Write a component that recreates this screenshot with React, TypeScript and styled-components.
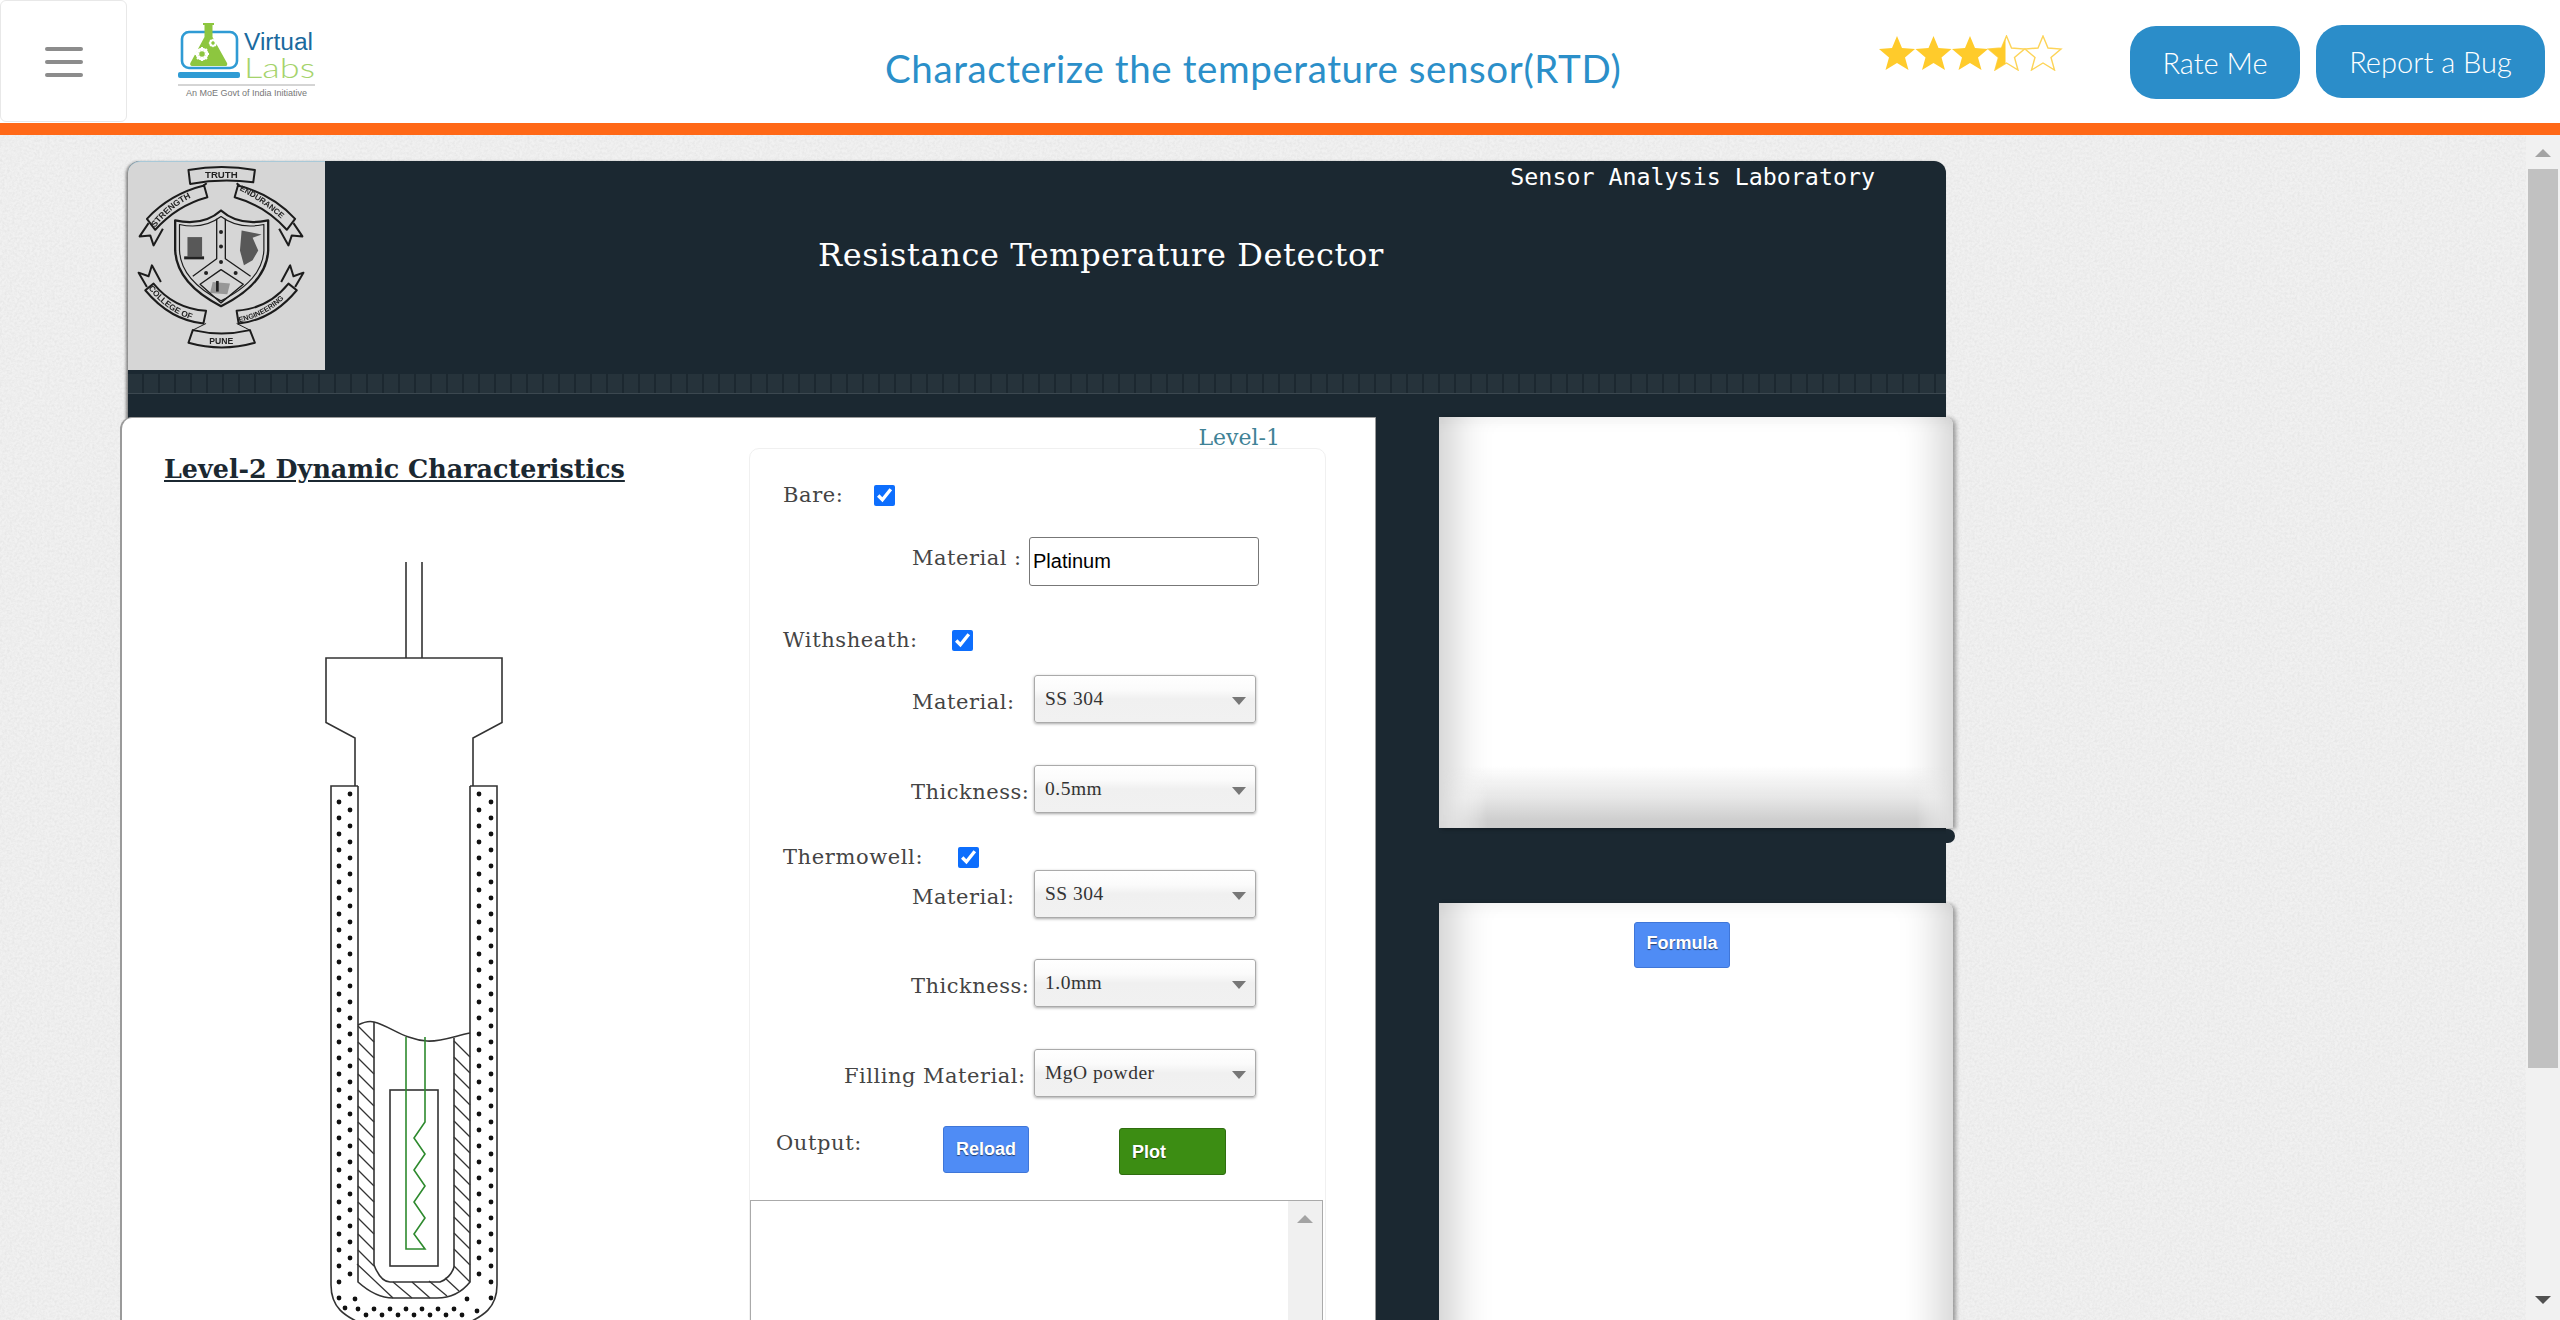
import React from "react";
import styled, { createGlobalStyle } from "styled-components";

const noise = `data:image/svg+xml,%3Csvg xmlns='http://www.w3.org/2000/svg' width='240' height='240'%3E%3Cfilter id='n'%3E%3CfeTurbulence type='fractalNoise' baseFrequency='.4' numOctaves='3' stitchTiles='stitch'/%3E%3CfeColorMatrix values='0 0 0 0 .62 0 0 0 0 .62 0 0 0 0 .62 .4 .4 0 0 -.3'/%3E%3C/filter%3E%3Crect width='240' height='240' filter='url(%23n)'/%3E%3C/svg%3E`;

const Global = createGlobalStyle`
  html, body { margin: 0; padding: 0; height: 100%; overflow: hidden; }
  #root { height: 100%; }
  * { box-sizing: border-box; }
`;

const DARK = "#1b2831";
const SERIF = `"DejaVu Serif", "Liberation Serif", serif`;
const DISPLAY = `Lato, "Open Sans", sans-serif`;

const Page = styled.div`
  height: 1320px;
  display: flex;
  flex-direction: column;
  overflow: hidden;
  background: #fff;
`;
const Header = styled.header`
  height: 135px;
  flex: none;
  display: flex;
  align-items: flex-start;
  background: #fff;
  border-bottom: 12px solid #ff6817;
`;
const MenuButton = styled.button`
  width: 127px;
  height: 122px;
  flex: none;
  display: flex;
  flex-direction: column;
  align-items: center;
  justify-content: center;
  gap: 9px;
  background: #fff;
  border: 1px solid #e8e8e8;
  border-radius: 6px;
  padding: 2px 0 0;
`;
const MenuBar = styled.span`
  width: 38px;
  height: 4px;
  border-radius: 2px;
  background: #8c8c8c;
`;
const LogoSvg = styled.svg`
  flex: none;
  margin: 23px 0 0 51px;
`;
const PageTitle = styled.h1`
  margin: 47px 0 0 570px;
  width: 740px;
  flex: none;
  font: 400 38.5px/42px ${DISPLAY};
  letter-spacing: 0.6px;
  color: #2b8fc9;
  white-space: nowrap;
`;
const Stars = styled.div`
  display: flex;
  flex: none;
  margin: 35px 0 0 252px;
  width: 253px;
`;
const HeaderButton = styled.button<{ $w: number; $top: number; $ml: number }>`
  width: ${(p) => p.$w}px;
  height: 73px;
  flex: none;
  margin: ${(p) => p.$top}px 0 0 ${(p) => p.$ml}px;
  border: none;
  border-radius: 26px;
  background: #2b8dc9;
  color: #fff;
  font: 300 29px/1 ${DISPLAY};
`;
const Body = styled.div`
  flex: 1;
  min-height: 0;
  display: flex;
`;
const Scroller = styled.main`
  flex: 1;
  min-width: 0;
  overflow: hidden;
  padding: 26px 0 0 128px;
  background-color: #f1f1f1;
  background-image: url("${noise}");
`;
const Scrollbar = styled.aside`
  width: 34px;
  flex: none;
  display: flex;
  flex-direction: column;
  align-items: center;
  background: #f1f1f1;
`;
const ArrowUp = styled.span`
  width: 0;
  height: 0;
  margin-top: 14px;
  border-left: 8px solid transparent;
  border-right: 8px solid transparent;
  border-bottom: 8px solid #a3a3a3;
`;
const ArrowDown = styled.span`
  width: 0;
  height: 0;
  margin-top: 228px;
  border-left: 8px solid transparent;
  border-right: 8px solid transparent;
  border-top: 8px solid #505050;
`;
const Thumb = styled.span`
  width: 30px;
  height: 899px;
  margin-top: 12px;
  background: #c1c1c1;
`;
const LabPanel = styled.section`
  width: 1818px;
  height: 1200px;
  background: ${DARK};
  border-radius: 12px 12px 0 0;
  box-shadow: -2px 1px 3px rgba(0, 0, 0, 0.45);
`;
const Banner = styled.div`
  height: 213px;
  display: flex;
  align-items: flex-start;
`;
const CrestBox = styled.div`
  width: 197px;
  height: 209px;
  flex: none;
  background: #d6d6d6;
  border-radius: 12px 0 0 0;
  border-top: 1px solid #a9c9d8;
  overflow: hidden;
`;
const CrestSvg = styled.svg`
  display: block;
  filter: blur(0.6px);
`;
const BannerText = styled.div`
  flex: 1;
  display: flex;
  flex-direction: column;
`;
const LabName = styled.div`
  align-self: flex-end;
  margin: 2px 71px 0 0;
  font: 400 23.3px/27px "DejaVu Sans Mono", monospace;
  color: #fff;
  white-space: nowrap;
`;
const LabTitle = styled.h2`
  margin: 44px 0 0 493px;
  font: 400 32px/42px ${SERIF};
  letter-spacing: 0.6px;
  color: #fff;
  white-space: nowrap;
`;
const Strip = styled.div`
  height: 20px;
  border-bottom: 1px solid #3c4850;
  background: repeating-linear-gradient(90deg, #26333b 0 14px, #1c2830 14px 16px);
`;
const Columns = styled.div`
  display: flex;
  align-items: flex-start;
  margin-top: 23px;
`;
const MainCard = styled.div`
  width: 1256px;
  height: 1000px;
  flex: none;
  margin-left: -8px;
  display: flex;
  background: #fff;
  border-radius: 12px 0 0 0;
  border-left: 2px solid #9a9a9a;
  border-top: 1px solid #9a9a9a;
  border-right: 1px solid #999;
`;
const DiagramColumn = styled.div`
  width: 627px;
  flex: none;
`;
const SectionTitle = styled.h3`
  margin: 35px 0 0 42px;
  font: 700 25.4px/32px ${SERIF};
  color: ${DARK};
  text-decoration: underline;
  white-space: nowrap;
`;
const Diagram = styled.svg`
  display: block;
  margin: 70px 0 0 198px;
`;
const FormColumn = styled.div`
  width: 577px;
  flex: none;
  display: flex;
  flex-direction: column;
`;
const LevelLink = styled.div`
  height: 30px;
  padding: 5px 46px 0 0;
  text-align: right;
  font: 400 22px/30px ${SERIF};
  color: #3f8296;
`;
const FormCard = styled.div`
  flex: 1;
  border: 1px solid #f0f0f0;
  border-radius: 10px;
  padding-top: 36px;
  display: flex;
  flex-direction: column;
`;
const CheckRow = styled.div<{ $mt: number }>`
  display: flex;
  align-items: center;
  height: 21px;
  margin-top: ${(p) => p.$mt}px;
  padding-left: 33px;
`;
const CheckLabel = styled.label<{ $w: number }>`
  width: ${(p) => p.$w}px;
  flex: none;
  margin-top: -1px;
  font: 400 21px/24px ${SERIF};
  letter-spacing: 0.6px;
  color: #444;
  white-space: nowrap;
`;
const Check = styled.input.attrs({ type: "checkbox" })`
  width: 21px;
  height: 21px;
  margin: 0;
  accent-color: #0d6efd;
`;
const FieldRow = styled.div<{ $mt: number; $col: number }>`
  display: grid;
  grid-template-columns: ${(p) => p.$col}px auto;
  align-items: center;
  margin-top: ${(p) => p.$mt}px;
`;
const FieldLabel = styled.label<{ $x: number; $shift: number }>`
  padding-left: ${(p) => p.$x}px;
  margin-top: ${(p) => p.$shift}px;
  font: 400 21px/24px ${SERIF};
  letter-spacing: 0.5px;
  color: #444;
  white-space: nowrap;
`;
const TextInput = styled.input`
  width: 230px;
  height: 49px;
  padding: 0 3px;
  border: 1px solid #777;
  border-radius: 3px;
  font: 400 20px/1 "Liberation Sans", sans-serif;
  color: #000;
  background: #fff;
`;
const SelectBox = styled.div`
  position: relative;
  width: 222px;
  height: 48px;
  &::after {
    content: "";
    position: absolute;
    right: 10px;
    top: 22px;
    border-left: 7px solid transparent;
    border-right: 7px solid transparent;
    border-top: 8px solid #777;
    pointer-events: none;
  }
`;
const Select = styled.select`
  appearance: none;
  width: 100%;
  height: 100%;
  padding: 0 0 0 10px;
  border: 1px solid #aaa;
  border-radius: 3px;
  background: linear-gradient(#fff 0, #fbfbfb 30%, #f0f0f0 50%, #f1f1f1 100%);
  box-shadow: 0 1px 3px rgba(0, 0, 0, 0.35);
  font: 400 19.5px/1 "Liberation Serif", serif;
  letter-spacing: 0.5px;
  color: #333;
`;
const OutputRow = styled.div`
  display: flex;
  align-items: flex-start;
  margin-top: 29px;
  height: 49px;
  padding-left: 26px;
`;
const OutputLabel = styled.label`
  width: 167px;
  flex: none;
  font: 400 21px/24px ${SERIF};
  letter-spacing: 0.6px;
  color: #444;
  margin-top: 5px;
`;
const ActionButton = styled.button<{ $bg: number }>`
  height: 47px;
  border-radius: 3px;
  border: 1px solid ${(p) => (p.$bg ? "#2f6d10" : "#3f76d8")};
  background: ${(p) => (p.$bg ? "#3c8d13" : "#4f8cf5")};
  color: #fff;
  font: 700 18px/1 "Liberation Sans", sans-serif;
  text-shadow: 0 1px 1px rgba(0, 0, 0, 0.55);
`;
const ReloadButton = styled(ActionButton)`
  width: 86px;
  padding: 0 0 2px;
`;
const PlotButton = styled(ActionButton)`
  width: 107px;
  margin: 2px 0 0 90px;
  padding: 0 0 0 12px;
  text-align: left;
`;
const OutputBox = styled.div`
  width: 573px;
  height: 200px;
  margin-top: 25px;
  display: flex;
  justify-content: flex-end;
  border: 1px solid #aaa;
  background: #fff;
`;
const BoxScroll = styled.div`
  width: 34px;
  background: #f0f0f0;
  display: flex;
  justify-content: center;
`;
const SideColumn = styled.div`
  width: 514px;
  flex: none;
  margin-left: 63px;
  position: relative;
`;
const PanelFrame = styled.div<{ $h: number }>`
  width: 514px;
  height: ${(p) => p.$h}px;
  border-radius: 0 8px 0 0;
  box-shadow: 3px 1px 4px rgba(0, 0, 0, 0.35);
`;
const ResultPanel = styled.div<{ $h: number }>`
  position: relative;
  width: 514px;
  height: ${(p) => p.$h}px;
  background: #fff;
  border-radius: 0 8px 0 0;
  overflow: hidden;
  display: flex;
  justify-content: center;
  align-items: flex-start;
  box-shadow: inset 46px 0 40px -32px rgba(0, 0, 0, 0.2),
    inset -46px 0 40px -32px rgba(0, 0, 0, 0.18),
    inset 0 16px 18px -14px rgba(0, 0, 0, 0.05);
  &::after {
    content: "";
    position: absolute;
    left: 0;
    right: 0;
    bottom: 0;
    height: 62px;
    background: linear-gradient(to top, #cdcdcd 0, #cfcfcf 14%, #e6e6e6 48%, rgba(255, 255, 255, 0) 100%);
    mask-image: linear-gradient(to right, transparent 4px, #000 48px, #000 calc(100% - 36px), transparent calc(100% - 2px));
  }
`;
const FormulaSlot = styled.div`
  margin-top: 75px;
`;
const FormulaPanel = styled(ResultPanel)`
  padding: 19px 28px 0 0;
`;
const FormulaButton = styled(ActionButton)`
  width: 96px;
  height: 46px;
  padding-bottom: 6px;
`;
const Nub = styled.span`
  position: absolute;
  left: 507px;
  top: 412px;
  width: 9px;
  height: 14px;
  background: ${DARK};
  border-radius: 0 7px 7px 0;
`;

const STAR = "M18 1 L23 13 L36 14 L26 22.5 L29.5 35 L18 28 L6.5 35 L10 22.5 L0 14 L13 13 Z";
function RatingStars() {
  return (
    <svg width="188" height="36" viewBox="0 0 184 36">
      <defs>
        <clipPath id="halfStar"><rect x="0" y="0" width="17" height="36" /></clipPath>
      </defs>
      {[0, 36.5, 73].map((x) => (
        <path key={x} d={STAR} transform={`translate(${x} 0)`} fill="#ffcb2b" />
      ))}
      <g transform="translate(109.5 0)">
        <path d={STAR} fill="#fff" stroke="#fdd458" strokeWidth="1.4" />
        <path d={STAR} fill="#ffcb2b" clipPath="url(#halfStar)" />
      </g>
      <path d={STAR} transform="translate(146 0)" fill="#fff" stroke="#fdd458" strokeWidth="1.4" />
    </svg>
  );
}

function Gear({ x, y, r }: { x: number; y: number; r: number }) {
  return (
    <g transform={`translate(${x} ${y})`}>
      <circle r={r} fill="none" stroke="#fff" strokeWidth={r * 0.55} />
      {[0, 45, 90, 135].map((a) => (
        <rect key={a} x={-r * 1.4} y={-r * 0.2} width={r * 2.8} height={r * 0.4} fill="#fff" transform={`rotate(${a})`} />
      ))}
      <circle r={r * 0.55} fill="#8dc63f" />
    </g>
  );
}

function Logo() {
  return (
    <LogoSvg width="137" height="78" viewBox="178 23 137 78">
      <rect x="182" y="32" width="55" height="36" rx="7" fill="none" stroke="#2f9bd4" strokeWidth="2.6" />
      <path d="M178 74a2 2 0 0 1 2-2h58a2 2 0 0 1 2 2v2a2 2 0 0 1-2 2h-58a2 2 0 0 1-2-2z" fill="#2f9bd4" />
      <path d="M203 23h11v2h-1.5v12L227 63a2 2 0 0 1-2 3h-33a2 2 0 0 1-1.6-3l14.1-26V25H203z" fill="#8dc63f" />
      <Gear x={202} y={54} r={5} />
      <Gear x={213} y={43} r={3} />
      <text x="244" y="50" fontFamily="'Liberation Sans', sans-serif" fontSize="23" fill="#1a6a9e" textLength="69" lengthAdjust="spacingAndGlyphs">Virtual</text>
      <text x="244" y="78" fontFamily="Lato, sans-serif" fontWeight="300" fontSize="27" fill="#a5d36b" textLength="71" lengthAdjust="spacingAndGlyphs">Labs</text>
      <line x1="178" x2="315" y1="85" y2="85" stroke="#aaa" strokeWidth="1" />
      <text x="186" y="96" fontFamily="'Liberation Sans', sans-serif" fontSize="9" fill="#777">An MoE Govt of India Initiative</text>
    </LogoSvg>
  );
}

function Crest() {
  const s = { fill: "none", stroke: "#1c1c1c", strokeWidth: 6 };
  const t = { fontFamily: "'Liberation Sans', sans-serif", fill: "#222", fontWeight: 700 };
  return (
    <CrestSvg width="197" height="208" viewBox="24 34 591 626">
      <defs>
        <path id="cpStrength" d="M104 232 Q170 150 250 127" />
        <path id="cpEndurance" d="M358 118 Q440 160 506 226" />
        <path id="cpCollege" d="M84 414 Q150 500 250 516" />
        <path id="cpEngineering" d="M358 516 Q460 495 528 406" />
      </defs>
      <g {...s} strokeLinejoin="round">
        <path d="M205 58 Q305 40 405 58 L400 95 Q305 82 210 100 Z" />
        <path d="M260 98 L250 105 M350 98 L358 105" />
        <path d="M80 205 Q150 130 252 105 L262 140 Q170 165 105 238 Z" />
        <path d="M85 218 L58 258 L90 255 L100 285 L128 235" />
        <path d="M526 205 Q456 130 354 105 L344 140 Q436 165 501 238 Z" />
        <path d="M521 218 L548 258 L516 255 L506 285 L478 235" />
        <path d="M165 210 Q250 228 303 180 Q356 228 445 210 L445 300 Q440 400 303 468 Q170 400 165 300 Z" strokeWidth="7" />
        <path d="M178 222 Q250 238 303 198 Q356 238 432 222 L432 300 Q428 390 303 452 Q182 390 178 300 Z" strokeWidth="3.5" />
        <path d="M290 205 V325 L218 378 M316 205 V325 L392 378 M303 358 L240 402 L303 458 L370 402 Z" strokeWidth="4" />
        <path d="M75 420 L100 400 Q160 475 258 482 L250 520 Q150 510 75 420 Z" />
        <path d="M80 410 L55 367 L85 378 L95 345 L122 395" />
        <path d="M531 420 L506 400 Q446 475 350 482 L356 520 Q456 510 531 420 Z" />
        <path d="M526 410 L551 367 L521 378 L511 345 L484 395" />
        <path d="M218 540 L205 578 Q305 606 405 578 L390 540 Q305 560 218 540 Z" />
        <path d="M258 520 L218 540 M350 520 L390 540" strokeWidth="3" />
      </g>
      <g fill="#222">
        <circle cx="303" cy="245" r="6" />
        <circle cx="303" cy="288" r="6" />
        <circle cx="303" cy="335" r="6" />
        <circle cx="258" cy="368" r="6" />
        <circle cx="347" cy="368" r="6" />
        <rect x="202" y="260" width="44" height="58" opacity="0.7" />
        <rect x="192" y="318" width="60" height="9" />
        <path d="M365 240 L425 252 L398 262 L415 300 L398 330 L372 345 L360 300 Z" opacity="0.7" />
        <path d="M278 395 L330 400 L322 432 L270 428 Z" opacity="0.35" />
        <rect x="288" y="392" width="8" height="32" />
      </g>
      <text x="304" y="83" textAnchor="middle" {...t} fontSize="29">TRUTH</text>
      <text x="304" y="583" textAnchor="middle" {...t} fontSize="26">PUNE</text>
      <text {...t} fontSize="26"><textPath href="#cpStrength">STRENGTH</textPath></text>
      <text {...t} fontSize="24"><textPath href="#cpEndurance">ENDURANCE</textPath></text>
      <text {...t} fontSize="25"><textPath href="#cpCollege">COLLEGE OF</textPath></text>
      <text {...t} fontSize="22"><textPath href="#cpEngineering">ENGINEERING</textPath></text>
    </CrestSvg>
  );
}

function range(n: number) {
  return Array.from({ length: n }, (_, i) => i);
}

function Sensor() {
  const line = { fill: "none", stroke: "#333", strokeWidth: 1.6 };
  const thin = { stroke: "#333", strokeWidth: 1.3 };
  const bottomDots = [
    [339, 1298], [355, 1299], [345, 1308], [358, 1309], [374, 1309], [390, 1309], [406, 1309],
    [422, 1309], [438, 1309], [454, 1309], [467, 1299], [477, 1311], [491, 1298],
    [366, 1315], [382, 1315], [398, 1315], [414, 1315], [430, 1315], [446, 1315], [462, 1315],
  ];
  return (
    <Diagram width="190" height="770" viewBox="320 555 190 770">
      <g {...line}>
        <path d="M406 562 V658 M422 562 V658" />
        <path d="M355 786 V738 L326 722.5 V658 H502 V722.5 L473 738 V786" />
        <path d="M358 786 H331 V1285 C331 1308 345 1316 362 1324 M470 786 H497 V1285 C497 1308 483 1316 466 1324" />
        <path d="M358 786 V1282 C368 1291 380 1298 393 1298 H437 C450 1298 462 1292 470 1282 V786" />
        <path d="M358 1025 C364 1022 370 1021 374 1022 C390 1026 405 1040 427 1041 C440 1042 455 1036 470 1033" />
        <path d="M374 1022 V1265 C378 1275 383 1282 390 1282 H440 C446 1280 452 1274 454 1267 V1038" />
        <rect x="390" y="1090" width="48" height="176" />
      </g>
      <g {...thin}>
        {range(15).map((i) => (
          <line key={i} x1="358" y1={1026 + i * 16} x2="374" y2={1042 + i * 16} />
        ))}
        {range(14).map((i) => (
          <line key={i} x1="454" y1={1041 + i * 16} x2="470" y2={1057 + i * 16} />
        ))}
        <line x1="357" y1="1264" x2="393" y2="1298" />
        <line x1="393" y1="1282" x2="412" y2="1298" />
        <line x1="412" y1="1282" x2="430" y2="1298" />
        <line x1="429" y1="1281" x2="447" y2="1296" />
        <line x1="445" y1="1278" x2="459" y2="1291" />
        <line x1="454" y1="1266" x2="470" y2="1282" />
      </g>
      <path d="M425 1037 V1122 L414 1138 L425 1154 L414 1170 L425 1186 L414 1202 L425 1218 L414 1234 L425 1249 H406 V1037" fill="none" stroke="#2e8a2e" strokeWidth="1.6" />
      <g fill="#111">
        {range(31).map((i) => <circle key={`a${i}`} cx="350" cy={794 + i * 16} r="2.4" />)}
        {range(31).map((i) => <circle key={`b${i}`} cx="339" cy={802 + i * 16} r="2.4" />)}
        {range(31).map((i) => <circle key={`c${i}`} cx="479" cy={794 + i * 16} r="2.4" />)}
        {range(31).map((i) => <circle key={`d${i}`} cx="491" cy={802 + i * 16} r="2.4" />)}
        {bottomDots.map(([x, y], i) => <circle key={`e${i}`} cx={x} cy={y} r="2.4" />)}
      </g>
    </Diagram>
  );
}

function Dropdown({ value }: { value: string }) {
  return (
    <SelectBox>
      <Select defaultValue={value}>
        <option>{value}</option>
      </Select>
    </SelectBox>
  );
}

export default function App() {
  return (
    <Page>
      <Global />
      <Header>
        <MenuButton aria-label="menu">
          <MenuBar />
          <MenuBar />
          <MenuBar />
        </MenuButton>
        <Logo />
        <PageTitle>Characterize the temperature sensor(RTD)</PageTitle>
        <Stars>
          <RatingStars />
        </Stars>
        <HeaderButton $w={170} $top={26} $ml={0}>Rate Me</HeaderButton>
        <HeaderButton $w={229} $top={25} $ml={16}>Report a Bug</HeaderButton>
      </Header>
      <Body>
        <Scroller>
          <LabPanel>
            <Banner>
              <CrestBox>
                <Crest />
              </CrestBox>
              <BannerText>
                <LabName>Sensor Analysis Laboratory</LabName>
                <LabTitle>Resistance Temperature Detector</LabTitle>
              </BannerText>
            </Banner>
            <Strip />
            <Columns>
              <MainCard>
                <DiagramColumn>
                  <SectionTitle>Level-2 Dynamic Characteristics</SectionTitle>
                  <Sensor />
                </DiagramColumn>
                <FormColumn>
                  <LevelLink>Level-1</LevelLink>
                  <FormCard>
                    <CheckRow $mt={0}>
                      <CheckLabel $w={91}>Bare:</CheckLabel>
                      <Check defaultChecked />
                    </CheckRow>
                    <FieldRow $mt={31} $col={279}>
                      <FieldLabel $x={162} $shift={-8}>Material :</FieldLabel>
                      <TextInput defaultValue="Platinum" />
                    </FieldRow>
                    <CheckRow $mt={44}>
                      <CheckLabel $w={169}>Withsheath:</CheckLabel>
                      <Check defaultChecked />
                    </CheckRow>
                    <FieldRow $mt={24} $col={284}>
                      <FieldLabel $x={162} $shift={6}>Material:</FieldLabel>
                      <Dropdown value="SS 304" />
                    </FieldRow>
                    <FieldRow $mt={42} $col={284}>
                      <FieldLabel $x={161} $shift={6}>Thickness:</FieldLabel>
                      <Dropdown value="0.5mm" />
                    </FieldRow>
                    <CheckRow $mt={34}>
                      <CheckLabel $w={175}>Thermowell:</CheckLabel>
                      <Check defaultChecked />
                    </CheckRow>
                    <FieldRow $mt={2} $col={284}>
                      <FieldLabel $x={162} $shift={6}>Material:</FieldLabel>
                      <Dropdown value="SS 304" />
                    </FieldRow>
                    <FieldRow $mt={41} $col={284}>
                      <FieldLabel $x={161} $shift={6}>Thickness:</FieldLabel>
                      <Dropdown value="1.0mm" />
                    </FieldRow>
                    <FieldRow $mt={42} $col={284}>
                      <FieldLabel $x={94} $shift={6}>Filling Material:</FieldLabel>
                      <Dropdown value="MgO powder" />
                    </FieldRow>
                    <OutputRow>
                      <OutputLabel>Output:</OutputLabel>
                      <ReloadButton $bg={0}>Reload</ReloadButton>
                      <PlotButton $bg={1}>Plot</PlotButton>
                    </OutputRow>
                    <OutputBox>
                      <BoxScroll>
                        <ArrowUp />
                      </BoxScroll>
                    </OutputBox>
                  </FormCard>
                </FormColumn>
              </MainCard>
              <SideColumn>
                <PanelFrame $h={411}>
                  <ResultPanel $h={411} />
                </PanelFrame>
                <Nub />
                <FormulaSlot>
                  <PanelFrame $h={600}>
                    <FormulaPanel $h={600}>
                      <FormulaButton $bg={0}>Formula</FormulaButton>
                    </FormulaPanel>
                  </PanelFrame>
                </FormulaSlot>
              </SideColumn>
            </Columns>
          </LabPanel>
        </Scroller>
        <Scrollbar>
          <ArrowUp />
          <Thumb />
          <ArrowDown />
        </Scrollbar>
      </Body>
    </Page>
  );
}
